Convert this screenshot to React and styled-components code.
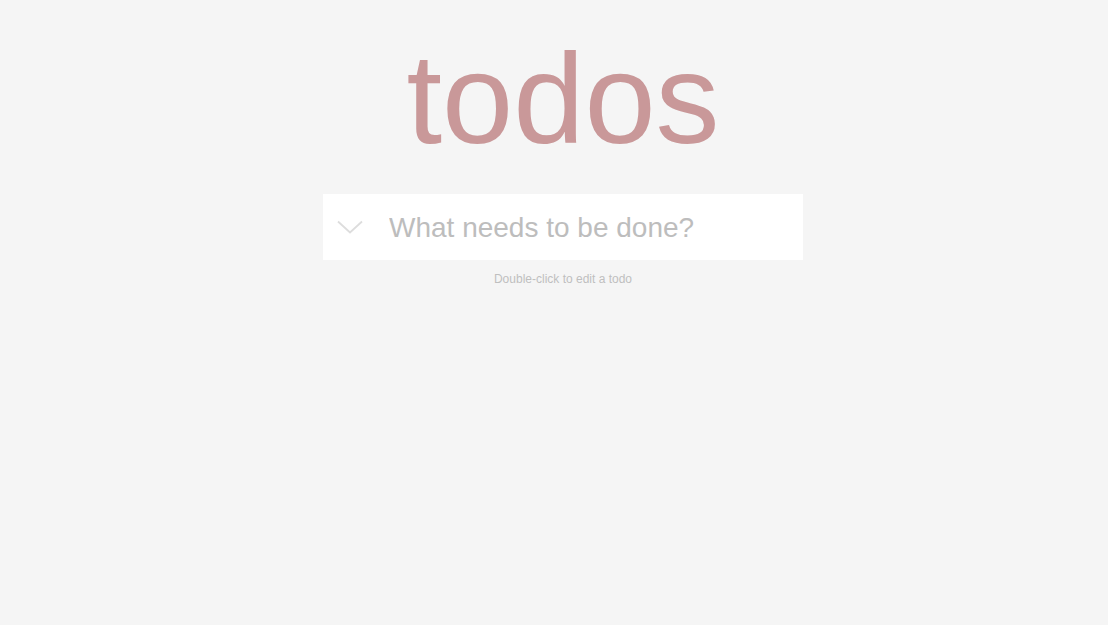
import React from "react";
import styled, { createGlobalStyle } from "styled-components";

const GlobalStyle = createGlobalStyle`
  html, body {
    margin: 0;
    padding: 0;
  }
  body {
    background: #f5f5f5;
    font-family: "Liberation Sans", Arial, Helvetica, sans-serif;
    color: #4d4d4d;
    -webkit-font-smoothing: antialiased;
  }
`;

const Page = styled.div`
  min-height: 625px;
  padding-left: 18px;
  box-sizing: border-box;
`;

const TodoApp = styled.section`
  width: 480px;
  margin: 0 auto;
  padding-top: 35px;
  display: flex;
  flex-direction: column;
  align-items: stretch;
`;

const Title = styled.h1`
  margin: 0;
  font-size: 128px;
  line-height: 1;
  font-weight: 400;
  text-align: center;
  color: #c99899;
  letter-spacing: 0;
`;

const Header = styled.header`
  margin-top: 31px;
  height: 66px;
  background: #fff;
  display: flex;
  align-items: center;
`;

const ToggleAll = styled.button`
  width: 66px;
  height: 66px;
  flex: none;
  border: none;
  background: transparent;
  padding: 0 0 0 14px;
  display: flex;
  align-items: center;
  justify-content: flex-start;
  box-sizing: border-box;
  cursor: pointer;
`;

const NewTodo = styled.input`
  flex: 1;
  min-width: 0;
  height: 66px;
  border: none;
  outline: none;
  background: transparent;
  padding: 2px 0 0 0;
  box-sizing: border-box;
  font-family: "Liberation Sans", Arial, Helvetica, sans-serif;
  font-size: 28px;
  color: #4d4d4d;
  &::placeholder {
    color: #bdbdbd;
    opacity: 1;
  }
`;

const Info = styled.footer`
  margin-top: 12px;
  text-align: center;
  font-size: 12px;
  line-height: 14px;
  color: #bfbfbf;
`;

export default function App() {
  return (
    <>
      <GlobalStyle />
      <Page>
        <TodoApp>
          <Title>todos</Title>
          <Header>
            <ToggleAll aria-label="Mark all as complete">
              <svg width="26" height="14" viewBox="0 0 26 14" fill="none">
                <path d="M1 1.5 L13 12.5 L25 1.5" stroke="#dddddd" strokeWidth="1.8" />
              </svg>
            </ToggleAll>
            <NewTodo placeholder="What needs to be done?" />
          </Header>
          <Info>Double-click to edit a todo</Info>
        </TodoApp>
      </Page>
    </>
  );
}
